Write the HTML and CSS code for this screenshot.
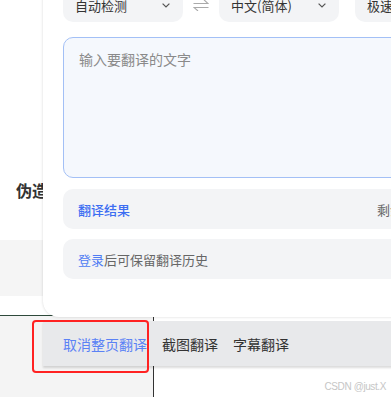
FILE: index.html
```html
<!DOCTYPE html>
<html lang="zh">
<head>
<meta charset="utf-8">
<link rel="stylesheet" href="styles.css">
</head>
<body>
<div class="page">
  <div class="hero"><span class="hero-title">伪造</span></div>
  <div class="band"></div>
  <div class="spacer"></div>
  <div class="lower">
    <div class="lower-left"></div>
    <div class="lower-right"></div>
  </div>
</div>

<div class="popup">
  <div class="panel">
    <div class="lang-row">
      <div class="select">
        <span>自动检测</span>
        <svg class="chev" width="8" height="5" viewBox="0 0 8 5"><path d="M0.6 0.6 L4 4 L7.4 0.6" fill="none" stroke="#555" stroke-width="1.2"/></svg>
      </div>
      <div class="swap">
        <svg width="16" height="12" viewBox="0 0 16 12"><path d="M0.5 4.5 H15 L11 0.8" fill="none" stroke="#aaa" stroke-width="1.1"/><path d="M15.5 8.5 H1 L5 12" fill="none" stroke="#aaa" stroke-width="1.1"/></svg>
      </div>
      <div class="select">
        <span>中文(简体)</span>
        <svg class="chev" width="8" height="5" viewBox="0 0 8 5"><path d="M0.6 0.6 L4 4 L7.4 0.6" fill="none" stroke="#555" stroke-width="1.2"/></svg>
      </div>
      <div class="select select-engine">
        <span>极速翻译</span>
      </div>
    </div>
    <div class="input">输入要翻译的文字</div>
    <div class="result">
      <span class="result-title">翻译结果</span>
      <span class="result-meta">剩余次数</span>
    </div>
    <div class="login"><span class="link">登录</span>后可保留翻译历史</div>
  </div>
  <div class="toolbar">
    <span class="tool tool-active">取消整页翻译</span>
    <span class="tool">截图翻译</span>
    <span class="tool">字幕翻译</span>
  </div>
</div>

<div class="highlight"></div>
<div class="watermark">CSDN @just.X</div>
</body>
</html>
```

FILE: styles.css
```css
* { box-sizing: border-box; }

html, body {
  margin: 0;
  padding: 0;
}

body {
  width: 391px;
  height: 397px;
  overflow: hidden;
  position: relative;
  background: #fff;
  font-family: "Noto Sans CJK SC", "Noto Sans", sans-serif;
  color: #333;
}

.page {
  display: flex;
  flex-direction: column;
  height: 397px;
}

.hero {
  height: 240px;
  padding: 178px 0 0 16px;
}

.hero-title {
  font-size: 16px;
  line-height: 20px;
  font-weight: 700;
  color: #333;
}

.band {
  height: 56px;
  background: #f5f5f5;
}

.spacer {
  height: 19px;
  background: #fff;
}

.lower {
  flex: 1;
  display: flex;
  border-top: 1px solid #2e4a3b;
}

.lower-left {
  width: 154px;
  background: #f4f4f4;
  border-right: 1px solid #333;
}

.lower-right {
  flex: 1;
  background: #fff;
}

.popup {
  position: absolute;
  left: 43px;
  top: -12px;
  width: 421px;
  display: flex;
  flex-direction: column;
  gap: 4px;
}

.panel {
  background: #fff;
  padding: 0 20px 38px 20px;
  border-radius: 0 0 0 16px;
  box-shadow: 0 0 3px rgba(0, 0, 0, 0.16);
  display: flex;
  flex-direction: column;
}

.lang-row {
  height: 34px;
  display: flex;
  align-items: center;
}

.select {
  width: 120px;
  height: 34px;
  flex: none;
  background: #f3f4f6;
  border-radius: 10px;
  padding: 0 13px 0 12px;
  display: flex;
  align-items: center;
  justify-content: space-between;
  font-size: 13px;
  color: #333;
}

.chev { display: block; }

.swap {
  width: 36px;
  flex: none;
  display: flex;
  justify-content: center;
  align-items: center;
}

.swap svg { display: block; }

.select-engine {
  margin-left: 16px;
}

.input {
  margin-top: 15px;
  height: 141px;
  border: 1px solid #a3c0f6;
  border-radius: 10px;
  background: #f5f8fd;
  padding: 11px 15px;
  font-size: 14px;
  line-height: 20px;
  color: #8a8a8a;
}

.result {
  margin-top: 11px;
  height: 40px;
  background: #f3f4f6;
  border-radius: 10px;
  padding: 0 15px;
  display: flex;
  align-items: center;
  justify-content: space-between;
  font-size: 13px;
}

.result-title {
  color: #3d6ef2;
  font-weight: 500;
}

.result-meta {
  color: #666;
  white-space: nowrap;
}

.login {
  margin-top: 10px;
  height: 40px;
  background: #f3f4f6;
  border-radius: 10px;
  padding: 0 15px;
  display: flex;
  align-items: center;
  font-size: 13px;
  color: #666;
}

.link {
  color: #4f7cf3;
}

.toolbar {
  height: 45px;
  background: #e8e9eb;
  padding: 0 0 0 20px;
  display: flex;
  align-items: center;
  gap: 15px;
  box-shadow: 0 2px 2px rgba(0, 0, 0, 0.14);
  font-size: 14px;
  line-height: 20px;
}

.tool {
  color: #333;
  white-space: nowrap;
}

.tool-active {
  color: #5b82f5;
}

.highlight {
  position: absolute;
  left: 32px;
  top: 320px;
  width: 117px;
  height: 53px;
  border: 2.5px solid #ff2222;
  border-radius: 4px;
}

.watermark {
  position: absolute;
  right: 5px;
  top: 380px;
  font-family: "Liberation Sans", Arial, sans-serif;
  font-size: 10px;
  letter-spacing: -0.4px;
  line-height: 13px;
  color: #c6c6c6;
}
```
